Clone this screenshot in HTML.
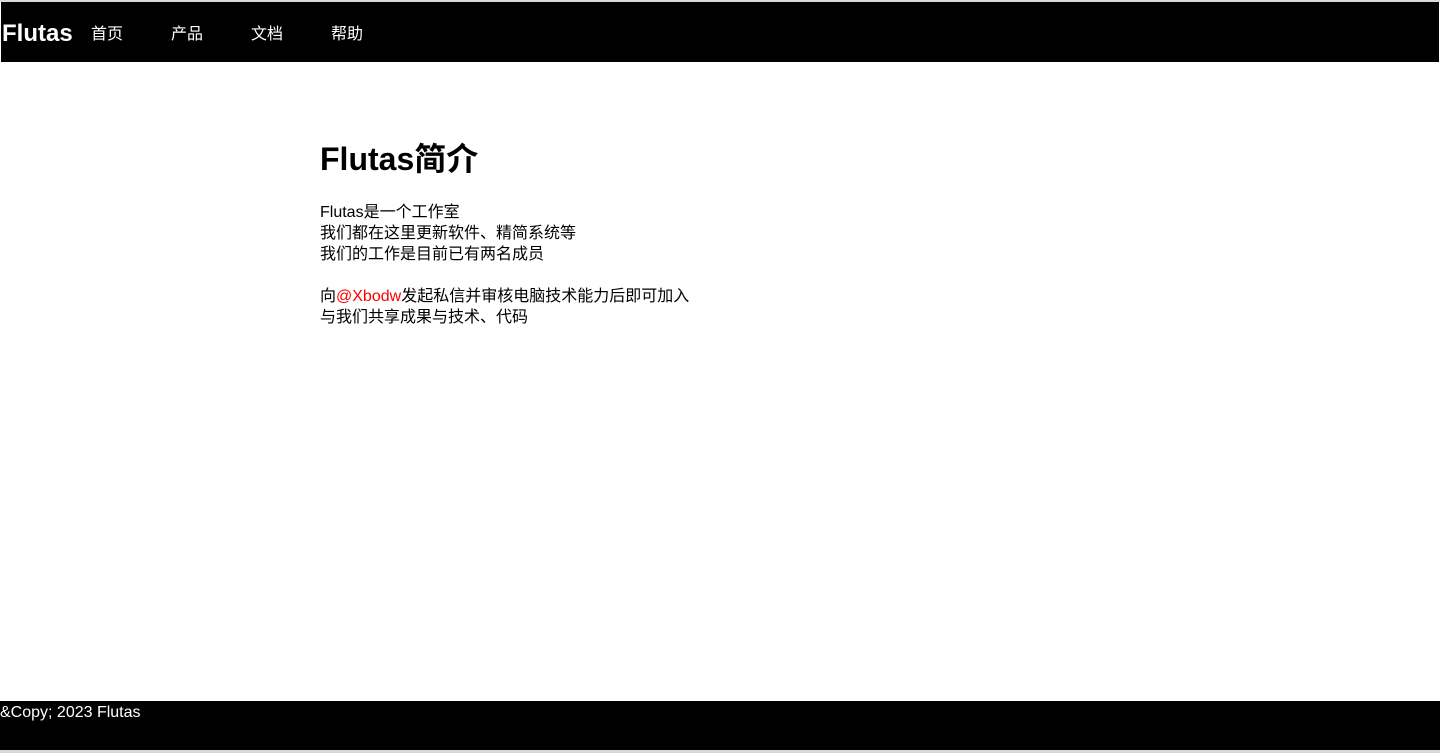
<!DOCTYPE html>
<html><head><meta charset="utf-8"><style>
html,body{margin:0;padding:0;background:#fff;}
body{width:1440px;height:753px;position:relative;overflow:hidden;font-family:"Liberation Sans","Noto Sans CJK SC",sans-serif;font-size:16px;color:#000;}
.top{position:absolute;left:0;top:0;width:1440px;height:2px;background:#d8d8d8;}
nav{position:absolute;left:1px;top:2px;width:1438px;height:60px;background:#000;color:#fff;}
.logo{position:absolute;left:1px;top:17px;font-size:24px;font-weight:bold;line-height:30px;}
.nav a{position:absolute;top:23px;color:#fff;text-decoration:none;font-size:16px;line-height:20px;}
main{position:absolute;left:320px;top:139px;}
h1{margin:0;font-size:32px;font-weight:bold;line-height:40px;}
p{margin:0;line-height:21px;}
.red{color:#f00;}
footer{position:absolute;left:0;top:701px;width:1440px;height:49px;background:#000;color:#fff;line-height:24px;}
.bot{position:absolute;left:0;top:750px;width:1440px;height:3px;background:#d8d8d8;}
</style></head><body>
<div class="top"></div>
<nav><div class="logo">Flutas</div>
<div class="nav"><a style="left:90px">首页</a><a style="left:170px">产品</a><a style="left:250px">文档</a><a style="left:330px">帮助</a></div></nav>
<main><h1>Flutas简介</h1>
<p style="margin-top:23px">Flutas是一个工作室<br>我们都在这里更新软件、精简系统等<br>我们的工作是目前已有两名成员</p>
<p style="margin-top:21px">向<span class="red">@Xbodw</span>发起私信并审核电脑技术能力后即可加入<br>与我们共享成果与技术、代码</p></main>
<footer>&amp;Copy; 2023 Flutas</footer>
<div class="bot"></div>
</body></html>
